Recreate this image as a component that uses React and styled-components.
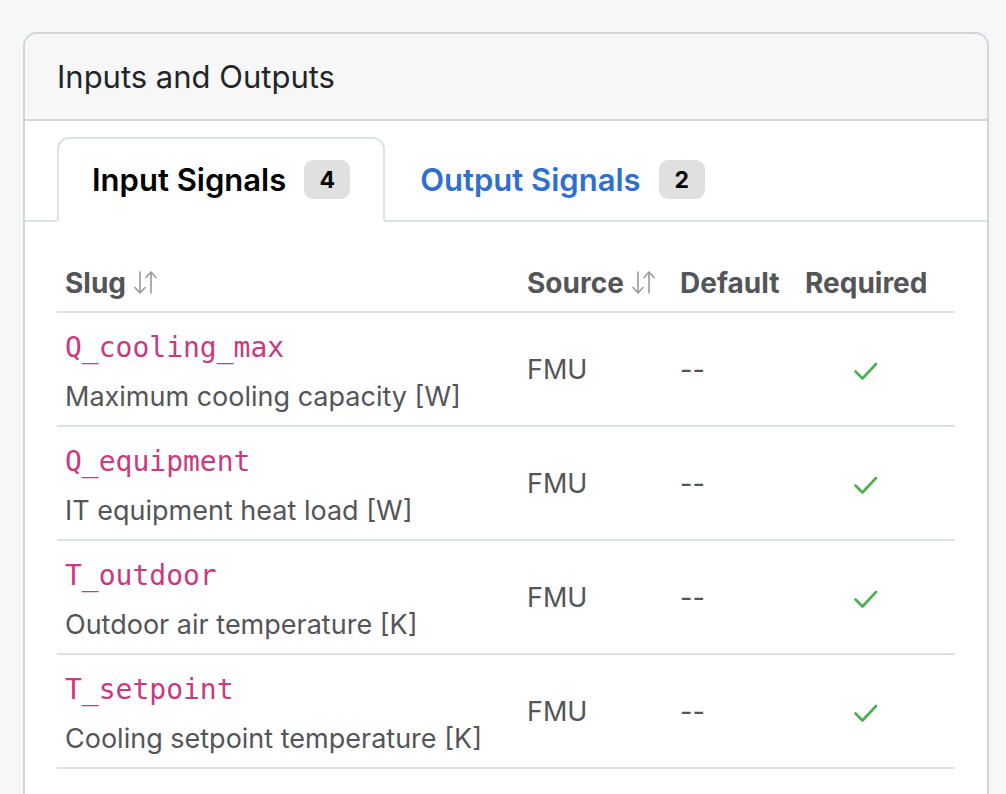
import React from "react";
import styled, { createGlobalStyle } from "styled-components";

const Global = createGlobalStyle`
  html, body { margin: 0; padding: 0; background: #f6f7f9; }
  body { font-family: Inter, "Noto Sans", sans-serif; }
`;

const Page = styled.div`
  padding: 32px 17px 0 23px;
  height: 794px;
  box-sizing: border-box;
  overflow: hidden;
`;

const Card = styled.section`
  background: #fff;
  border: 2px solid #d4d4d6;
  border-radius: 14px;
  overflow: hidden;
  min-height: 900px;
`;

const CardHeader = styled.header`
  background: #f7f7f8;
  border-bottom: 2px solid #d4d4d6;
  height: 85px;
  display: flex;
  align-items: center;
  padding: 0 32px;
  font-size: 31px;
  color: #212529;
`;

const Body = styled.div`
  padding: 16px 0 0;
`;

const Tabs = styled.nav`
  display: flex;
  padding: 0 32px;
  border-bottom: 2px solid #dee2e6;
`;

const Tab = styled.div`
  display: flex;
  align-items: center;
  gap: 18px;
  height: 81px;
  padding: 0 33px 0 33px;
  margin-bottom: -2px;
  border: 2px solid ${(p) => (p.$active ? "#dee2e6" : "transparent")};
  border-bottom-color: ${(p) => (p.$active ? "#fff" : "transparent")};
  border-radius: 12px 12px 0 0;
  background: ${(p) => (p.$active ? "#fff" : "transparent")};
  color: ${(p) => (p.$active ? "#000" : "#2e6fd1")};
  font-size: 31px;
  font-weight: 600;
`;

const Badge = styled.span`
  display: inline-flex;
  align-items: center;
  justify-content: center;
  width: 46px;
  height: 39px;
  border-radius: 9px;
  background: #e0e0e0;
  color: #000;
  font-size: 23px;
  font-weight: 700;
`;

const TableWrap = styled.div`
  padding: 32px 32px 0;
`;

const Table = styled.table`
  width: 100%;
  table-layout: fixed;
  border-collapse: collapse;
  color: #545559;
  font-size: 27px;
`;

const Th = styled.th`
  text-align: left;
  font-weight: 700;
  font-size: 28px;
  padding: 0 8px;
  height: 57px;
  vertical-align: middle;
  border-bottom: 2px solid #dee2e6;
  white-space: nowrap;
  width: ${(p) => p.$w || "auto"};
`;

const Td = styled.td`
  text-align: ${(p) => (p.$center ? "center" : "left")};
  padding: ${(p) => (p.$stack ? "6px" : "0")} ${(p) => (p.$center ? "29px" : "8px")} 0 8px;
  height: 106px;
  vertical-align: middle;
  border-bottom: 2px solid #dee2e6;
`;

const Code = styled.code`
  display: block;
  font-family: "DejaVu Sans Mono", monospace;
  font-size: 28px;
  color: #c93a7f;
  line-height: 1;
  margin-bottom: 21px;
`;

const Desc = styled.div`
  font-size: 27px;
  line-height: 1;
`;

const SortIcon = () => (
  <svg width="26" height="24" viewBox="0 0 26 24" style={{ verticalAlign: "-2px", marginLeft: 7 }}>
    <g fill="none" stroke="#9a9a9e" strokeWidth="1.6" strokeLinecap="round" strokeLinejoin="round">
      <path d="M7 1v21M2 16.5l5 5.5 5-5.5" />
      <path d="M18 22V1M13 6.5 18 1l5 5.5" />
    </g>
  </svg>
);

const Check = () => (
  <svg width="26" height="22" viewBox="0 0 26 22" style={{ verticalAlign: "middle" }}>
    <path d="M2.5 11.5 9.5 18.5 23 4" fill="none" stroke="#4caf50" strokeWidth="2.6" strokeLinecap="round" strokeLinejoin="round" />
  </svg>
);

const rows = [
  ["Q_cooling_max", "Maximum cooling capacity [W]"],
  ["Q_equipment", "IT equipment heat load [W]"],
  ["T_outdoor", "Outdoor air temperature [K]"],
  ["T_setpoint", "Cooling setpoint temperature [K]"],
];

export default function App() {
  return (
    <>
      <Global />
      <Page>
        <Card>
          <CardHeader>Inputs and Outputs</CardHeader>
          <Body>
            <Tabs>
              <Tab $active>
                Input Signals <Badge>4</Badge>
              </Tab>
              <Tab>
                Output Signals <Badge>2</Badge>
              </Tab>
            </Tabs>
            <TableWrap>
              <Table>
                <thead>
                  <tr>
                    <Th $w="446px">
                      Slug<SortIcon />
                    </Th>
                    <Th $w="137px">
                      Source<SortIcon />
                    </Th>
                    <Th $w="109px">Default</Th>
                    <Th>Required</Th>
                  </tr>
                </thead>
                <tbody>
                  {rows.map(([slug, desc]) => (
                    <tr key={slug}>
                      <Td $stack>
                        <Code>{slug}</Code>
                        <Desc>{desc}</Desc>
                      </Td>
                      <Td>FMU</Td>
                      <Td>--</Td>
                      <Td $center>
                        <Check />
                      </Td>
                    </tr>
                  ))}
                </tbody>
              </Table>
            </TableWrap>
          </Body>
        </Card>
      </Page>
    </>
  );
}
